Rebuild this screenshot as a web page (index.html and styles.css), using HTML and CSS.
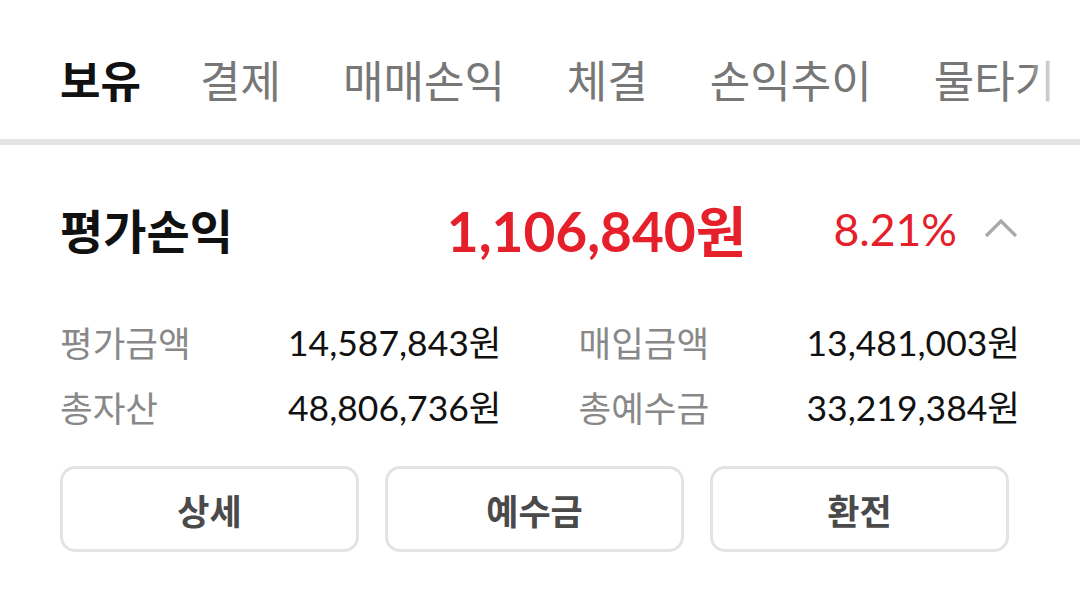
FILE: index.html
```html
<!DOCTYPE html>
<html lang="ko">
<head>
<meta charset="utf-8">
<link rel="stylesheet" href="styles.css">
</head>
<body>
<nav class="tabbar">
  <div class="tabs">
    <span class="tab active">보유</span>
    <span class="tab">결제</span>
    <span class="tab">매매손익</span>
    <span class="tab">체결</span>
    <span class="tab">손익추이</span>
    <span class="tab">물타기</span>
  </div>
  <div class="fade"></div>
</nav>
<section class="summary">
  <div class="pl-row">
    <h2 class="pl-label">평가손익</h2>
    <span class="pl-value"><span class="num">1,106,840</span>원</span>
    <span class="pl-rate num">8.21%</span>
    <svg class="chev" width="34" height="20" viewBox="0 0 34 20"><path d="M2 18 L17 3 L32 18" fill="none" stroke="#a9a9a9" stroke-width="3.2"/></svg>
  </div>
  <div class="details">
    <div class="item"><span class="k">평가금액</span><span class="v"><span class="num">14,587,843</span>원</span></div>
    <div class="item"><span class="k">매입금액</span><span class="v"><span class="num">13,481,003</span>원</span></div>
    <div class="item"><span class="k">총자산</span><span class="v"><span class="num">48,806,736</span>원</span></div>
    <div class="item"><span class="k">총예수금</span><span class="v"><span class="num">33,219,384</span>원</span></div>
  </div>
  <div class="buttons">
    <button class="btn">상세</button>
    <button class="btn">예수금</button>
    <button class="btn">환전</button>
  </div>
</section>
</body>
</html>
```

FILE: styles.css
```css
* { box-sizing: border-box; }
html, body { margin: 0; padding: 0; background: #fff; }
body {
  font-family: "Noto Sans CJK KR", "Noto Sans", sans-serif;
  color: #111;
  width: 1080px;
  height: 595px;
  overflow: hidden;
}
.num { font-family: Lato, "Noto Sans CJK KR", sans-serif; }

.tabbar {
  position: relative;
  border-bottom: 6px solid #e3e3e3;
  overflow: hidden;
}
.tabs {
  display: flex;
  gap: 62px;
  padding-left: 60px;
  white-space: nowrap;
}
.tab {
  font-size: 44px;
  line-height: 1;
  color: #777;
  padding-top: 57px;
  padding-bottom: 38px;
  margin-bottom: -6px;
  border-bottom: 6px solid transparent;
  flex: none;
}
.tab.active {
  color: #111;
  font-weight: 700;
  border-bottom-color: #111;
  margin-right: -3px;
}
.fade {
  position: absolute;
  right: 0;
  top: 0;
  bottom: 0;
  width: 50px;
  background: linear-gradient(to right, rgba(255,255,255,0), rgba(255,255,255,0.8) 45%, #fff 55%);
}

.summary {
  padding: 0 60px;
}
.pl-row {
  display: flex;
  align-items: center;
  height: 80px;
  margin-top: 43px;
}
.pl-label {
  margin: 0;
  flex: 1;
  font-size: 47px;
  font-weight: 700;
  color: #111;
}
.pl-value {
  color: #e5202b;
  font-size: 55px;
  font-weight: 700;
}
.pl-rate {
  color: #e5202b;
  font-size: 44.5px;
  margin-left: 87px;
}
.chev {
  margin-left: 27px;
  margin-right: 2px;
}

.details {
  display: grid;
  grid-template-columns: 1fr 1fr;
  column-gap: 77px;
  row-gap: 21px;
  margin-top: 52px;
}
.item {
  display: flex;
  justify-content: space-between;
  align-items: center;
  font-size: 35.5px;
  line-height: 42px;
}
.k { color: #888; }
.v { color: #111; }

.buttons {
  display: grid;
  grid-template-columns: repeat(3, 299px);
  column-gap: 26px;
  margin-top: 37px;
}
.btn {
  height: 86px;
  background: #fff;
  border: 3px solid #e3e3e3;
  border-radius: 15px;
  font-family: "Noto Sans CJK KR", sans-serif;
  font-size: 35px;
  font-weight: 700;
  color: #4a4a4a;
}
```
